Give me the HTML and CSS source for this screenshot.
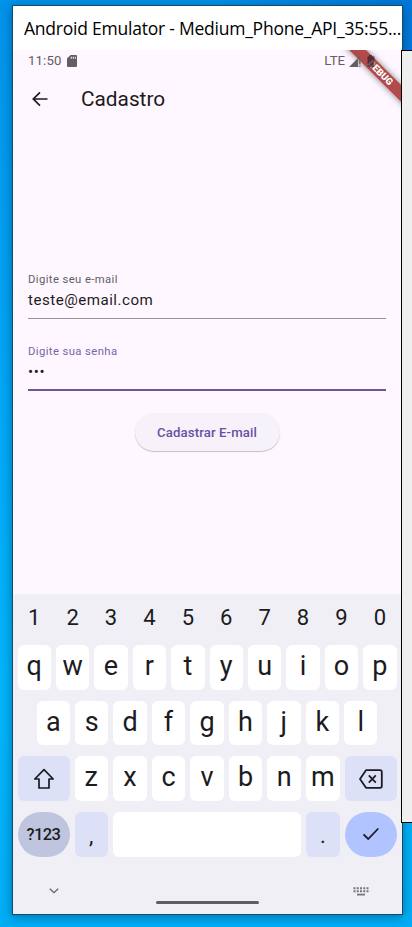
FILE: index.html
```html
<!DOCTYPE html>
<html lang="pt-BR">
<head>
<meta charset="utf-8">
<title>Cadastro</title>
<link rel="stylesheet" href="styles.css">
</head>
<body>
<div class="desktop">
  <aside class="panel"></aside>
  <main class="window">
    <header class="titlebar">Android Emulator - Medium_Phone_API_35:55...</header>
    <section class="app">
      <div class="status">
        <span>11:50</span>
        <svg class="sd" width="10" height="12" viewBox="0 0 10 12"><path fill="#625e64" fill-rule="evenodd" d="M3.6 0H9q1 0 1 1v10q0 1-1 1H1q-1 0-1-1V3.6zM3.8 1.8v2h1v-2zm2 0v2h1v-2zm2 0v2h1v-2z"/></svg>
        <span class="lte">LTE</span>
        <svg class="signal" width="27" height="14" viewBox="0 0 27 14"><path fill="#625e64" d="M0 13 11 2v3H9.2v8zM10.2 6h1.3v4.5h-1.3zm0 5.5h1.3V13h-1.3z"/><path fill="#3b2028" fill-opacity=".75" d="M20 1h3v1.3h1.500q1 0 1 1V12q0 1-1 1h-5q-1 0-1-1V3.300q0-1 1-1H20z"/></svg>
      </div>
      <div class="ribbon-clip"><div class="ribbon">DEBUG</div></div>
      <div class="appbar">
        <svg width="16" height="16" viewBox="0 0 16 16"><path d="M15.500 8H1.500M8 1.300 1.300 8 8 14.700" fill="none" stroke="#1d1b20" stroke-width="1.700"/></svg>
        <h1>Cadastro</h1>
      </div>
      <form class="form">
        <div class="field"><label>Digite seu e-mail</label><div class="value">teste@email.com</div></div>
        <div class="field focused"><label>Digite sua senha</label><div class="value dots">•••</div></div>
        <button type="button">Cadastrar E-mail</button>
      </form>
    </section>
    <section class="keyboard">
      <div class="row digits"><span>1</span><span>2</span><span>3</span><span>4</span><span>5</span><span>6</span><span>7</span><span>8</span><span>9</span><span>0</span></div>
      <div class="row"><b>q</b><b>w</b><b>e</b><b>r</b><b>t</b><b>y</b><b>u</b><b>i</b><b>o</b><b>p</b></div>
      <div class="row middle"><b>a</b><b>s</b><b>d</b><b>f</b><b>g</b><b>h</b><b>j</b><b>k</b><b>l</b></div>
      <div class="row lower">
        <b class="wide tint"><svg width="22" height="22" viewBox="0 0 22 22"><path d="M11 1.700 20.200 11H16v9H6v-9H1.800z" fill="none" stroke="#1b1b21" stroke-width="1.700" stroke-linejoin="round"/></svg></b>
        <b>z</b><b>x</b><b>c</b><b>v</b><b>b</b><b>n</b><b>m</b>
        <b class="wide tint"><svg width="24" height="20" viewBox="0 0 24 20"><path d="M7 1.200h14q1.800 0 1.800 1.800v14q0 1.800-1.800 1.800H7L1 10z" fill="none" stroke="#1b1b21" stroke-width="1.800" stroke-linejoin="round"/><path d="m9.800 6.300 7 7.400m0-7.400-7 7.400" stroke="#1b1b21" stroke-width="1.700"/></svg></b>
      </div>
      <div class="row bottom">
        <b class="wide mode">?123</b><b class="tint punct">,</b><b class="space"></b><b class="tint punct">.</b>
        <b class="wide enter"><svg width="18" height="14" viewBox="0 0 18 14"><path d="m1.500 7.300 4.700 4.700L16.300 1.500" fill="none" stroke="#1b1b21" stroke-width="1.800"/></svg></b>
      </div>
      <div class="nav">
        <svg class="hide" width="10" height="6" viewBox="0 0 10 6"><path d="m.8.7 4.200 4L9.200.7" fill="none" stroke="#646369" stroke-width="1.300"/></svg>
        <i></i>
        <svg class="switch" width="16" height="9" viewBox="0 0 16 9"><path d="M.5 1.300h15M.5 4.300h15" stroke="#77767b" stroke-width="2" stroke-dasharray="2 1.250"/><path d="M4 7.600h8" stroke="#77767b" stroke-width="1.800"/></svg>
      </div>
    </section>
  </main>
</div>
</body>
</html>
```
FILE: styles.css
```css
* { box-sizing: border-box; }
body { margin: 0; font-family: Roboto, sans-serif; }
.desktop {
  position: relative;
  width: 412px;
  height: 927px;
  padding: 5px 0 0 12px;
  overflow: hidden;
  background: linear-gradient(90deg, transparent 50%, #0078db 100%) 0 0 / 100% 300px no-repeat, linear-gradient(#0093ea, #00a5f5 38%, #00b5fb 75%, #00aef5);
}
.panel {
  position: absolute;
  left: 401px;
  top: 50px;
  z-index: 2;
  width: 20px;
  height: 773px;
  border: 1px solid #000;
  background: #efefef;
}
.window {
  width: 391px;
  height: 910px;
  border: 1px solid #164b66;
  background: #f0eff6;
  box-shadow: 0 2px 10px rgba(0, 35, 70, .45);
}
.titlebar {
  height: 44px;
  padding-left: 11px;
  background: #fff;
  color: #000;
  font: 17.500px/44px "Open Sans", sans-serif;
  letter-spacing: -.23px;
  white-space: nowrap;
}
.app { position: relative; height: 544px; background: #fef7ff; }
.status {
  position: relative;
  z-index: 1;
  display: flex;
  align-items: center;
  height: 21px;
  padding: 0 26px 0 15px;
  color: #625e64;
  font-size: 13.200px;
  letter-spacing: .15px;
}
.sd { margin-left: 5px; }
.lte { margin-left: auto; letter-spacing: 0; }
.signal { margin-left: 4px; }
.ribbon-clip { position: absolute; right: 1px; top: 0; width: 80px; height: 80px; overflow: hidden; }
.ribbon {
  position: absolute;
  right: -36.500px;
  top: 17px;
  width: 115px;
  height: 11.500px;
  transform: rotate(45deg);
  background: rgba(160, 35, 35, .82);
  box-shadow: 0 0 6px rgba(0, 0, 0, .5);
  color: #fff;
  font-size: 9.6px;
  font-weight: 900;
  line-height: 12px;
  text-align: center;
}
.appbar { display: flex; align-items: center; gap: 33px; height: 56px; padding-left: 19px; }
h1 { margin: 0; color: #1d1b20; font-size: 20.8px; font-weight: 400; line-height: 24px; }
.form { display: flex; flex-direction: column; align-items: center; padding: 144px 16px 0 15px; }
.field { width: 100%; height: 48px; margin-bottom: 24px; padding-top: 1px; border-bottom: 1px solid #969098; }
label { display: block; color: #625d66; font-size: 11.3px; line-height: 16px; letter-spacing: .39px; }
.value { color: #1d1b20; font-size: 15.1px; line-height: 25px; letter-spacing: .5px; }
.focused { border-bottom: 2px solid #69579a; margin-bottom: 22px; }
.focused label { color: #7965a9; }
.dots { letter-spacing: .6px; }
button {
  width: 145px;
  height: 38px;
  padding: 0;
  border: 0;
  border-radius: 19px;
  background: #f7f2fa;
  box-shadow: 0 1px 1px rgba(0, 0, 0, .23);
  color: #6750a4;
  font: 500 13.2px Roboto, sans-serif;
  letter-spacing: .1px;
}
.keyboard { padding: 0 5.500px 0 4.500px; color: #1b1b21; }
.row { display: flex; gap: 5px; height: 44.500px; margin-bottom: 11.200px; }
.row b {
  display: flex;
  flex: 1 1 0;
  align-items: center;
  justify-content: center;
  padding-bottom: 2px;
  border-radius: 6px;
  background: #fff;
  font-size: 27px;
  font-weight: 400;
}
.digits { height: 45px; margin-bottom: 6px; }
.digits span { flex: 1; text-align: center; font-size: 22px; line-height: 47px; }
.middle { padding: 0 19px; }
.row .wide { flex: 0 0 52px; padding: 0; }
.lower b { padding-bottom: 3px; }
.row .tint { background: #dde1f8; }
.row .mode { border-radius: 23px; background: #c0c5df; font-size: 16.500px; letter-spacing: -.6px; font-weight: 500; }
.row .punct { flex: 0 0 33.400px; padding: 3px 0 0; font-size: 22px; }
.row .enter { border-radius: 23px; background: #b1c4ff; }
.bottom { margin-bottom: 0; }
.nav { display: flex; align-items: center; height: 56px; padding: 0 28px 0 31px; }
.nav i { width: 103px; height: 3px; margin: 36px 0 0 97px; border-radius: 2px; background: #5f5e64; }
.hide, .switch { margin-top: 13px; }
.switch { margin-left: auto; }
```
